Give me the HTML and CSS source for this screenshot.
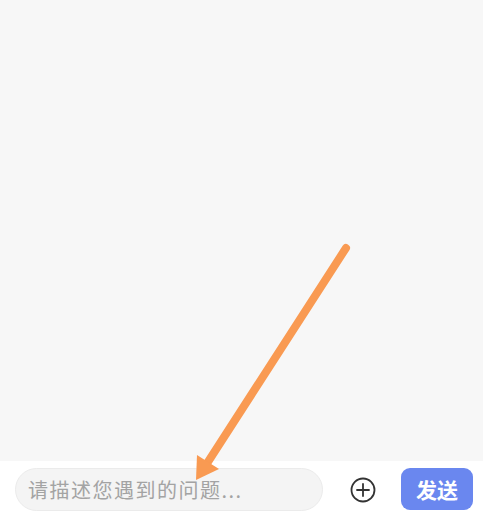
FILE: index.html
```html
<!DOCTYPE html>
<html lang="zh-CN">
<head>
    <meta charset="utf-8">
    <title>问题反馈</title>
    <link rel="stylesheet" href="styles.css">
</head>
<body>
    <div class="page">
        <div class="chat_area"></div>
        <div class="input_bar">
            <div class="msg_input">请描述您遇到的问题...</div>
            <div class="add_btn">
                <svg width="28" height="28" viewBox="0 0 28 28">
                    <circle cx="14" cy="14" r="11.5" fill="none" stroke="#333" stroke-width="1.8"/>
                    <path d="M14 8v12M8 14h12" stroke="#333" stroke-width="1.8" stroke-linecap="round"/>
                </svg>
            </div>
            <button class="send_btn">发送</button>
        </div>
        <!-- annotation arrow drawn over the screenshot -->
        <svg class="arrow" width="483" height="512" viewBox="0 0 483 512">
            <line x1="346" y1="248" x2="206" y2="465" stroke="#f99a52" stroke-width="8" stroke-linecap="round"/>
            <polygon points="196,480 197,455 219,469" fill="#f99a52"/>
        </svg>
    </div>
</body>
</html>
```

FILE: styles.css
```css
html, body {
    margin: 0;
    padding: 0;
}

body {
    font-family: "Noto Sans CJK SC", "Noto Sans", sans-serif;
    background-color: white;
}

.page {
    position: relative;
    width: 483px;
    height: 512px;
    display: flex;
    flex-direction: column;
    overflow: hidden;
}

.chat_area {
    flex: 1;
    background-color: #f7f7f7;
}

.input_bar {
    height: 51px;
    box-sizing: border-box;
    padding: 7px 10px 0 15px;
    display: flex;
    align-items: flex-start;
    background-color: white;
}

.msg_input {
    width: 308px;
    height: 43px;
    box-sizing: border-box;
    border: 1px solid #ebebeb;
    border-radius: 22px;
    background-color: #f4f4f4;
    color: #a3a3a3;
    font-size: 20px;
    letter-spacing: 1.5px;
    line-height: 41px;
    padding-left: 12px;
}

.add_btn {
    width: 28px;
    height: 28px;
    margin: 8px 0 0 26px;
}

.send_btn {
    margin-left: 24px;
    width: 72px;
    height: 42px;
    border: none;
    border-radius: 9px;
    background-color: #6a87ef;
    color: white;
    font-family: "Noto Sans CJK SC", sans-serif;
    font-size: 21px;
    font-weight: bold;
    padding: 0;
}

.arrow {
    position: absolute;
    left: 0;
    top: 0;
    pointer-events: none;
}
```
